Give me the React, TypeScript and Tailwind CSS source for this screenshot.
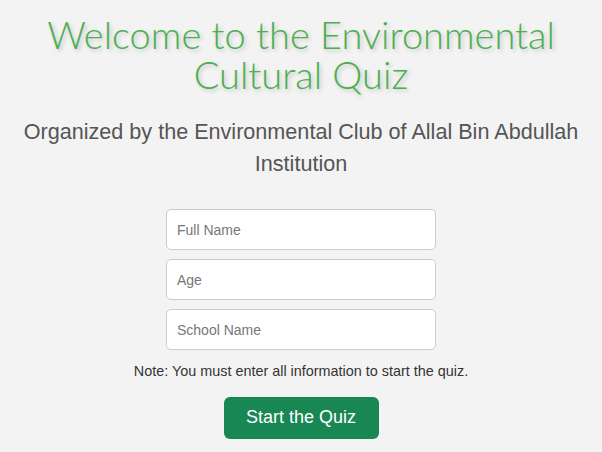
export default function App() {
  return (
    <div className="min-h-screen bg-[#f3f3f3] flex flex-col items-center pt-[14px] font-['Liberation_Sans',Arial,sans-serif]">
      <h1 className="text-center text-[38px] leading-[40px] font-light text-[#4caf50] font-['Lato',sans-serif] [text-shadow:2px_2px_4px_rgba(0,0,0,0.2)] w-[560px]">
        Welcome to the Environmental Cultural Quiz
      </h1>
      <p className="mt-[22px] text-center text-[21.6px] leading-[32px] text-[#555] w-[580px]">
        Organized by the Environmental Club of Allal Bin Abdullah Institution
      </p>
      <form className="mt-[29px] flex flex-col items-center gap-[9px]">
        {['Full Name', 'Age', 'School Name'].map(p => (
          <input
            key={p}
            type="text"
            placeholder={p}
            className="w-[270px] h-[41px] px-[10px] bg-white border border-[#ccc] rounded-[5px] text-[14px] placeholder:text-[#777] outline-none"
          />
        ))}
        <p className="mt-[2px] text-[14.4px] text-[#333]">Note: You must enter all information to start the quiz.</p>
        <button
          type="button"
          className="mt-[5px] w-[155px] h-[42px] rounded-[6px] bg-[#198754] text-white text-[18px]"
        >
          Start the Quiz
        </button>
      </form>
    </div>
  );
}
